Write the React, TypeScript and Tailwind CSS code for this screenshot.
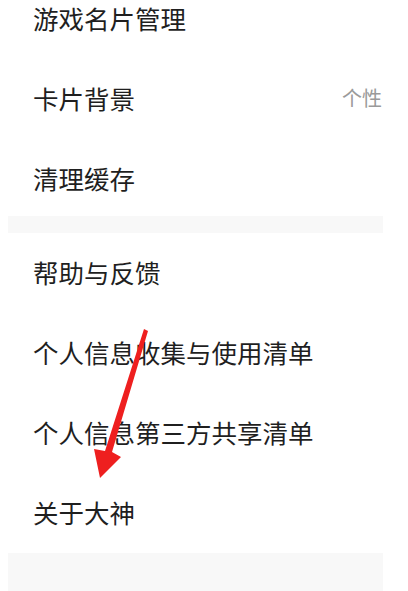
const font = { fontFamily: '"Noto Sans CJK SC", "Noto Sans", sans-serif' }

const groupOne = ['游戏名片管理', '卡片背景', '清理缓存']
const groupTwo = ['帮助与反馈', '个人信息收集与使用清单', '个人信息第三方共享清单', '关于大神']

function Row({ label, value, offset }: { label: string; value?: string; offset?: boolean }) {
  return (
    <div className={`flex h-[80px] items-center justify-between pl-[25px] pr-[1px] ${offset ? 'pt-[4px]' : 'pb-[3px]'}`}>
      <span className="text-[25.5px] leading-none text-[#1f1f1f]">{label}</span>
      {value && <span className="text-[20px] leading-none text-[#9a9a9a]">{value}</span>}
    </div>
  )
}

export default function App() {
  return (
    <div className="relative h-[591px] w-full overflow-hidden bg-white" style={font}>
      <div className="ml-[8px] flex h-full w-[375px] flex-col">
        {/* first group, scrolled partly out of view */}
        <div className="-mt-[24px] flex flex-col bg-white">
          {groupOne.map((label) => (
            <Row key={label} label={label} value={label === '卡片背景' ? '个性' : undefined} offset />
          ))}
        </div>

        <div className="h-[17px] bg-[#f8f8f8]" />

        <div className="flex flex-col bg-white">
          {groupTwo.map((label) => (
            <Row key={label} label={label} />
          ))}
        </div>

        <div className="flex-1 bg-[#f8f8f8]" />
      </div>

      {/* red annotation arrow */}
      <svg className="pointer-events-none absolute left-0 top-0" width="408" height="591" viewBox="0 0 408 591">
        <polygon
          points="144,329 148,331 112,452 121,457 100,478 94,449 105,451"
          fill="#ee1f1f"
        />
      </svg>
    </div>
  )
}
